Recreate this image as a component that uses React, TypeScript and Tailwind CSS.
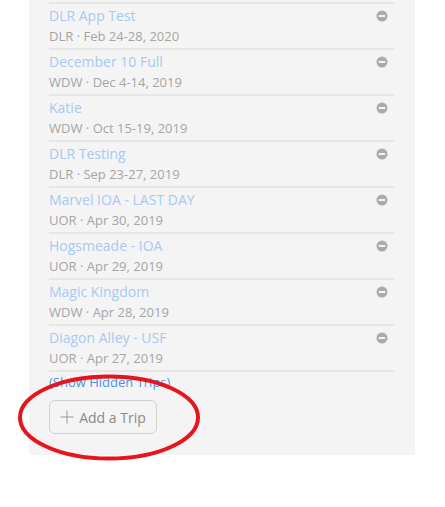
import React from 'react'

const trips = [
  { name: 'DLR App Test', park: 'DLR', dates: 'Feb 24-28, 2020' },
  { name: 'December 10 Full', park: 'WDW', dates: 'Dec 4-14, 2019' },
  { name: 'Katie', park: 'WDW', dates: 'Oct 15-19, 2019' },
  { name: 'DLR Testing', park: 'DLR', dates: 'Sep 23-27, 2019' },
  { name: 'Marvel IOA - LAST DAY', park: 'UOR', dates: 'Apr 30, 2019' },
  { name: 'Hogsmeade - IOA', park: 'UOR', dates: 'Apr 29, 2019' },
  { name: 'Magic Kingdom', park: 'WDW', dates: 'Apr 28, 2019' },
  { name: 'Diagon Alley - USF', park: 'UOR', dates: 'Apr 27, 2019' },
]

function MinusIcon() {
  return (
    <svg width="12" height="12" viewBox="0 0 12 12">
      <circle cx="6" cy="6" r="5.5" fill="#ababab" />
      <rect x="2.8" y="5" width="6.4" height="2" fill="#f4f4f4" />
    </svg>
  )
}

export default function App() {
  return (
    <div
      className="relative w-[445px] h-[507px] bg-white overflow-hidden"
      style={{ fontFamily: '"Open Sans", "Liberation Sans", sans-serif' }}
    >
      <div className="ml-[29px] w-[386px] h-[455px] bg-[#f4f4f4] pt-[2px] pl-[20px] pr-[21px]">
        {trips.map((t) => (
          <div
            key={t.name}
            className="flex border-t-2 border-[#e6e6e6] pt-[2px] pb-[2px]"
          >
            <div className="flex-1">
              <div className="text-[14px] leading-[20px] text-[#a9c8f2]">{t.name}</div>
              <div className="text-[13px] leading-[20px] text-[#a5a5a5]">
                {t.park} · {t.dates}
              </div>
            </div>
            <div className="pt-[4px] pr-[6px]">
              <MinusIcon />
            </div>
          </div>
        ))}
        <div className="border-t-2 border-[#e6e6e6] pt-[1px]">
          <div className="text-[13px] leading-[18px] text-[#4a94e0]">(Show Hidden Trips)</div>
        </div>
        <button className="mt-[9px] h-[34px] w-[108px] flex items-center justify-center gap-[5px] border border-[#cfcfcf] rounded-[6px] bg-[#f4f4f4] text-[14px] text-[#8a8a8a]">
          <svg width="14" height="14" viewBox="0 0 14 14">
            <path d="M7 0.5v13M0.5 7h13" stroke="#999999" strokeWidth="1" />
          </svg>
          Add a Trip
        </button>
      </div>
      <svg
        className="absolute left-0 top-0 pointer-events-none"
        width="445"
        height="507"
        viewBox="0 0 445 507"
      >
        <ellipse cx="109" cy="417.5" rx="89" ry="41" fill="none" stroke="#e8141c" strokeWidth="4" />
      </svg>
    </div>
  )
}
